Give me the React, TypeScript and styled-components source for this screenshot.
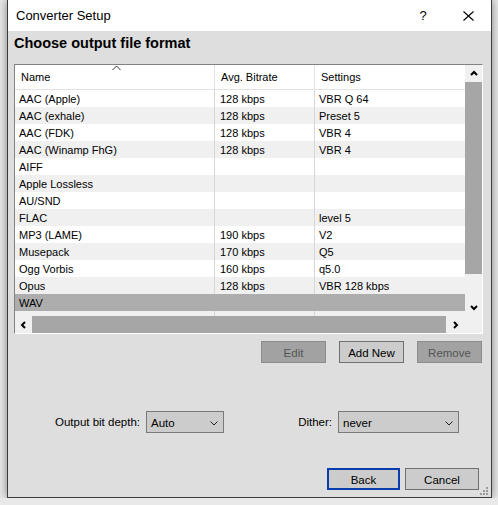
import styled, { createGlobalStyle } from "styled-components";

const GlobalStyle = createGlobalStyle`
  html, body {
    margin: 0;
    padding: 0;
  }
  body {
    background: #e9e9e9;
    font-family: "Liberation Sans", Arial, sans-serif;
    font-size: 11px;
    color: #000;
    overflow: hidden;
  }
`;

const Window = styled.div`
  position: relative;
  width: 485px;
  height: 498px;
  box-sizing: border-box;
  margin-left: 7px;
  border: 1px solid #3c3c3c;
  border-top: none;
  box-shadow: 0 0 9px rgba(0, 0, 0, 0.45);
  display: flex;
  flex-direction: column;
  background: #dedede;
`;

const TitleBar = styled.div`
  height: 31px;
  flex: none;
  background: #fff;
  display: flex;
  align-items: center;
  padding-left: 8px;
  font-size: 13px;
`;

const Title = styled.span`
  flex: 1;
`;

const TitleButton = styled.div<{ $w: number }>`
  width: ${(p) => p.$w}px;
  height: 31px;
  display: flex;
  align-items: center;
  justify-content: center;
  font-size: 13px;
  margin-left: ${(p) => (p.$w > 40 ? 7 : 0)}px;
`;

const Body = styled.div`
  flex: 1;
  display: flex;
  flex-direction: column;
  padding: 0 8px 7px 6px;
`;

const Heading = styled.h1`
  margin: 0;
  height: 33px;
  box-sizing: border-box;
  padding-top: 2px;
  line-height: 20px;
  font-size: 14.5px;
  font-weight: bold;
`;

const ListBox = styled.div`
  width: 469px;
  height: 270px;
  box-sizing: border-box;
  border: 1px solid;
  border-color: #828282 #fff #fff #828282;
  background: #fff;
  display: grid;
  grid-template-columns: 450px 17px;
  grid-template-rows: 251px 17px;
`;

const TableArea = styled.div`
  overflow: hidden;
`;

const Columns = styled.div`
  display: grid;
  grid-template-columns: 200px 100px 150px;
`;

const HeaderRow = styled(Columns)`
  height: 25px;
  box-sizing: border-box;
  border-bottom: 1px solid #e2e2e2;
`;

const HeaderCell = styled.div<{ $last?: boolean }>`
  position: relative;
  padding-left: 6px;
  padding-top: 1px;
  line-height: 23px;
  border-right: ${(p) => (p.$last ? "none" : "1px solid #e2e2e2")};
`;

const SortArrow = styled.svg`
  position: absolute;
  left: 97px;
  top: 0;
`;

const Row = styled(Columns)<{ $bg: string }>`
  height: 17px;
  background: ${(p) => p.$bg};
`;

const Cell = styled.div<{ $line: boolean; $pad: number }>`
  padding-left: ${(p) => p.$pad}px;
  padding-top: 1px;
  line-height: 16px;
  white-space: nowrap;
  border-right: ${(p) => (p.$line ? "1px solid #d6d6d6" : "none")};
`;

const VScroll = styled.div`
  display: flex;
  flex-direction: column;
  background: #f0f0f0;
`;

const HScroll = styled.div`
  display: flex;
  background: #f0f0f0;
`;

const ScrollButton = styled.div<{ $size: number; $grow?: boolean }>`
  flex: ${(p) => (p.$grow ? "1" : "none")};
  width: 100%;
  min-width: ${(p) => p.$size}px;
  height: ${(p) => p.$size}px;
  display: flex;
  align-items: center;
  justify-content: center;
`;

const HScrollButton = styled(ScrollButton)`
  width: ${(p) => p.$size}px;
  height: 17px;
`;

const Thumb = styled.div<{ $w: string; $h: string }>`
  width: ${(p) => p.$w};
  height: ${(p) => p.$h};
  flex: none;
  background: #a6a6a6;
`;

const Track = styled.div`
  flex: 1;
`;

const Corner = styled.div`
  background: #f0f0f0;
`;

const ButtonRow = styled.div`
  margin-top: 7px;
  display: flex;
  justify-content: flex-end;
  gap: 13px;
  padding-right: 1px;
`;

const Button = styled.button<{ $w: number; $variant?: "disabled" | "default" }>`
  width: ${(p) => p.$w}px;
  height: 22px;
  box-sizing: border-box;
  padding: 1px 0 0;
  font-family: inherit;
  font-size: 11.5px;
  color: ${(p) => (p.$variant === "disabled" ? "#555" : "#000")};
  background: ${(p) => (p.$variant === "disabled" ? "#a2a2a2" : "#cccccc")};
  border: ${(p) =>
    p.$variant === "default"
      ? "2px solid #0a3cae"
      : p.$variant === "disabled"
      ? "1px solid #8c8c8c"
      : "1px solid #707070"};
`;

const OptionsRow = styled.div`
  margin-top: 48px;
  display: flex;
  padding-left: 41px;
`;

const Field = styled.label<{ $w: number; $gap: number; $ml: number }>`
  width: ${(p) => p.$w}px;
  margin-left: ${(p) => p.$ml}px;
  display: flex;
  align-items: center;
  justify-content: flex-end;
  gap: ${(p) => p.$gap}px;
  white-space: nowrap;
  font-size: 11.5px;
`;

const Combo = styled.div<{ $w: number }>`
  width: ${(p) => p.$w}px;
  height: 22px;
  flex: none;
  box-sizing: border-box;
  border: 1px solid #7a7a7a;
  background: #cccccc;
  display: flex;
  align-items: center;
  justify-content: space-between;
  padding: 2px 5px 0 4px;
`;

const Footer = styled.div`
  margin-top: auto;
  display: flex;
  justify-content: flex-end;
  gap: 5px;
  padding-right: 4px;
`;

const Grip = styled.svg`
  position: absolute;
  right: 3px;
  bottom: 2px;
`;

const formats = [
  ["AAC (Apple)", "128 kbps", "VBR Q 64"],
  ["AAC (exhale)", "128 kbps", "Preset 5"],
  ["AAC (FDK)", "128 kbps", "VBR 4"],
  ["AAC (Winamp FhG)", "128 kbps", "VBR 4"],
  ["AIFF", "", ""],
  ["Apple Lossless", "", ""],
  ["AU/SND", "", ""],
  ["FLAC", "", "level 5"],
  ["MP3 (LAME)", "190 kbps", "V2"],
  ["Musepack", "170 kbps", "Q5"],
  ["Ogg Vorbis", "160 kbps", "q5.0"],
  ["Opus", "128 kbps", "VBR 128 kbps"],
  ["WAV", "", ""],
  ["", "", ""],
];

const Chevron = ({ dir, bold }: { dir: "up" | "down" | "left" | "right"; bold?: boolean }) => {
  const pts = {
    up: "1,5 4,2 7,5",
    down: "1,2 4,5 7,2",
    left: "5,1 2,4 5,7",
    right: "2,1 5,4 2,7",
  }[dir];
  const vertical = dir === "up" || dir === "down";
  return (
    <svg width={vertical ? 8 : 7} height={vertical ? 7 : 8} viewBox={vertical ? "0 0 8 7" : "0 0 7 8"}>
      <polyline points={pts} fill="none" stroke="#000" strokeWidth={bold ? 2 : 1} />
    </svg>
  );
};

const DropArrow = () => (
  <svg width="8" height="5" viewBox="0 0 8 5">
    <polyline points="0.5,0.5 4,4 7.5,0.5" fill="none" stroke="#222" strokeWidth="1" />
  </svg>
);

export default function App() {
  return (
    <>
      <GlobalStyle />
      <Window>
        <TitleBar>
          <Title>Converter Setup</Title>
          <TitleButton $w={30}>?</TitleButton>
          <TitleButton $w={46}>
            <svg width="11" height="10" viewBox="0 0 11 10">
              <path d="M0.5 0.5 L10.5 9.5 M10.5 0.5 L0.5 9.5" stroke="#000" strokeWidth="1.1" />
            </svg>
          </TitleButton>
        </TitleBar>
        <Body>
          <Heading>Choose output file format</Heading>
          <ListBox>
            <TableArea>
              <HeaderRow>
                <HeaderCell>
                  <SortArrow width="9" height="6" viewBox="0 0 9 6">
                    <polyline points="0.5,5 4.5,1 8.5,5" fill="none" stroke="#333" strokeWidth="1" />
                  </SortArrow>
                  Name
                </HeaderCell>
                <HeaderCell>Avg. Bitrate</HeaderCell>
                <HeaderCell $last>Settings</HeaderCell>
              </HeaderRow>
              {formats.map((f, i) => {
                const selected = f[0] === "WAV";
                const bg = selected ? "#adadad" : i % 2 ? "#f0f0f0" : "#fff";
                return (
                  <Row key={i} $bg={bg}>
                    <Cell $line={!selected} $pad={4}>{f[0]}</Cell>
                    <Cell $line={!selected} $pad={5}>{f[1]}</Cell>
                    <Cell $line={false} $pad={4}>{f[2]}</Cell>
                  </Row>
                );
              })}
            </TableArea>
            <VScroll>
              <ScrollButton $size={17}>
                <Chevron dir="up" bold />
              </ScrollButton>
              <Thumb $w="100%" $h="192px" />
              <Track />
              <ScrollButton $size={17}>
                <Chevron dir="down" bold />
              </ScrollButton>
            </VScroll>
            <HScroll>
              <HScrollButton $size={17}>
                <Chevron dir="left" bold />
              </HScrollButton>
              <Thumb $w="414px" $h="17px" />
              <HScrollButton $size={19} $grow>
                <Chevron dir="right" bold />
              </HScrollButton>
            </HScroll>
            <Corner />
          </ListBox>
          <ButtonRow>
            <Button $w={65} $variant="disabled">Edit</Button>
            <Button $w={65}>Add New</Button>
            <Button $w={65} $variant="disabled">Remove</Button>
          </ButtonRow>
          <OptionsRow>
            <Field $w={169} $gap={6} $ml={0}>
              Output bit depth:
              <Combo $w={78}>
                Auto
                <DropArrow />
              </Combo>
            </Field>
            <Field $w={162} $gap={6} $ml={73}>
              Dither:
              <Combo $w={121}>
                never
                <DropArrow />
              </Combo>
            </Field>
          </OptionsRow>
          <Footer>
            <Button $w={73} $variant="default">Back</Button>
            <Button $w={74}>Cancel</Button>
          </Footer>
        </Body>
        <Grip width="8" height="8" viewBox="0 0 8 8">
          <rect x="6" y="0" width="2" height="2" fill="#9a9a9a" />
          <rect x="3" y="3" width="2" height="2" fill="#9a9a9a" />
          <rect x="6" y="3" width="2" height="2" fill="#9a9a9a" />
          <rect x="0" y="6" width="2" height="2" fill="#9a9a9a" />
          <rect x="3" y="6" width="2" height="2" fill="#9a9a9a" />
          <rect x="6" y="6" width="2" height="2" fill="#9a9a9a" />
        </Grip>
      </Window>
    </>
  );
}
